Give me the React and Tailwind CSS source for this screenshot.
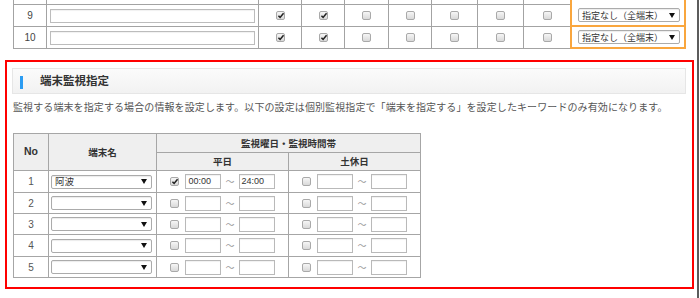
import React from 'react';

const FONT = "font-['Noto_Sans_CJK_JP',sans-serif]";
const NUM = "font-['Liberation_Sans',Arial,sans-serif]";

function Check({ checked }) {
  return (
    <span className="relative inline-flex w-[9px] h-[9px] shrink-0 rounded-[2px] border border-[#a9a9a9] bg-gradient-to-b from-[#f6f6f6] to-[#d9d9d9]">
      {checked && (
        <svg viewBox="0 0 10 10" className="absolute left-[0px] top-[-1px] w-[8px] h-[9px]">
          <path d="M1.8 5.2 L3.9 7.4 L8.2 2.2" fill="none" stroke="#222" strokeWidth="1.9" />
        </svg>
      )}
    </span>
  );
}

function Arrow() {
  return (
    <svg viewBox="0 0 6 5" className="w-[6px] h-[5px] shrink-0">
      <path d="M0 0 H6 L3 5 Z" fill="#111" />
    </svg>
  );
}

function Select({ label, width, textSize = 'text-[9.5px]' }) {
  return (
    <div
      className={`flex items-center justify-between h-[14px] ${width} rounded-[2px] border border-[#ababab] bg-white pl-[3px] pr-[4px] shadow-[inset_0_1px_1px_rgba(0,0,0,0.08)]`}
    >
      <span className={`${textSize} leading-none text-[#333]`}>{label}</span>
      <Arrow />
    </div>
  );
}

function TimeInput({ value }) {
  return (
    <div className={`flex items-center w-[36px] h-[15px] border border-[#b9b9b9] bg-white pl-[2px] ${NUM} text-[9px] text-[#333] leading-none shadow-[inset_0_1px_1px_rgba(0,0,0,0.06)]`}>
      {value}
    </div>
  );
}

function TimeRange({ checked, from, to }) {
  return (
    <div className="flex items-center justify-center h-full">
      <Check checked={checked} />
      <div className="ml-[6px]">
        <TimeInput value={from} />
      </div>
      <span className="mx-[4px] text-[9px] leading-none text-[#999]">～</span>
      <TimeInput value={to} />
    </div>
  );
}

const topCols = ['w-[33px]', 'w-[212px]', 'w-[43px]', 'w-[43px]', 'w-[44px]', 'w-[43px]', 'w-[46px]', 'w-[46px]', 'w-[46px]'];

function TopRow({ no, height, stub }) {
  const boxes = [true, true, false, false, false, false, false];
  return (
    <div className={`flex ${height}`}>
      <div className={`${topCols[0]} shrink-0 border-r border-b border-[#a3a3a3] flex items-center justify-center ${NUM} text-[10px] text-[#444]`}>
        {!stub && no}
      </div>
      <div className={`${topCols[1]} shrink-0 border-r border-b border-[#a3a3a3] flex items-center pl-[3px]`}>
        {!stub && <div className="w-[205px] h-[14px] border border-[#bcbcbc] bg-white shadow-[inset_0_1px_1px_rgba(0,0,0,0.06)]" />}
      </div>
      {boxes.map((c, i) => (
        <div
          key={i}
          className={`${topCols[i + 2]} shrink-0 ${i < 6 ? 'border-r' : ''} border-b border-[#a3a3a3] flex items-center justify-center`}
        >
          {!stub && <Check checked={c} />}
        </div>
      ))}
      <div className={`w-[116px] shrink-0 border-x-2 ${stub ? '' : 'border-b-2'} border-[#f9a63e] flex items-center pl-[6px]`}>
        {!stub && <Select label="指定なし（全端末）" width="w-[102px]" textSize="text-[9px]" />}
      </div>
    </div>
  );
}

const head = 'bg-[#efefef] border-r border-b border-[#a6a6a6] flex items-center justify-center text-[9.5px] font-bold text-[#333]';
const cell = 'border-r border-b border-[#a6a6a6] flex items-center';

const rows = [
  { no: 1, name: '阿波', wd: true, from: '00:00', to: '24:00' },
  { no: 2 },
  { no: 3 },
  { no: 4 },
  { no: 5 },
];

export default function App() {
  return (
    <div className={`flex w-[700px] h-[298px] overflow-hidden bg-white ${FONT}`}>
      <div className="w-[697px]">
        <div className="ml-[13px] w-[674px] border-l border-[#a3a3a3]">
          <TopRow stub height="h-[5px]" />
          <TopRow no={9} height="h-[22px]" />
          <TopRow no={10} height="h-[22px]" />
        </div>

        <div className="mt-[11px] ml-[5px] w-[689px] h-[229px] border-2 border-[#ff0000] pt-[6px] pl-[5px]">
          <div className="flex items-center w-[674px] h-[26px] border border-[#e6e6e6] bg-gradient-to-b from-[#fbfbfb] to-[#f2f2f2] pl-[7px]">
            <span className="w-[3px] h-[13px] mt-[2px] bg-[#2b9cf2]" />
            <span className="ml-[17px] text-[11.5px] font-bold text-[#333] leading-none">端末監視指定</span>
          </div>

          <p className="mt-[6px] ml-[1px] text-[10px] leading-[14px] tracking-[0.1px] text-[#555] whitespace-nowrap">
            監視する端末を指定する場合の情報を設定します。以下の設定は個別監視指定で「端末を指定する」を設定したキーワードのみ有効になります。
          </p>

          <div className="mt-[19px] ml-[1px] w-[408px] grid grid-cols-[35px_108px_132px_132px] grid-rows-[19px_18px_22px_21px_21px_22px_21px] border-l border-t border-[#a6a6a6]">
            <div className={`${head} row-span-2 ${NUM} text-[10.5px]`}>No</div>
            <div className={`${head} row-span-2`}>端末名</div>
            <div className={`${head} col-span-2`}>監視曜日・監視時間帯</div>
            <div className={head}>平日</div>
            <div className={head}>土休日</div>
            {rows.map((r) => (
              <React.Fragment key={r.no}>
                <div className={`${cell} justify-center ${NUM} text-[10px] text-[#555]`}>{r.no}</div>
                <div className={`${cell} pl-[2px]`}>
                  <Select label={r.name || ''} width="w-[101px]" />
                </div>
                <div className={cell + ' justify-center'}>
                  <TimeRange checked={!!r.wd} from={r.from || ''} to={r.to || ''} />
                </div>
                <div className={cell + ' justify-center'}>
                  <TimeRange checked={false} from="" to="" />
                </div>
              </React.Fragment>
            ))}
          </div>
        </div>
      </div>
      <div className="w-[2px] h-full bg-[#5c5c5c]" />
      <div className="w-[1px]" />
    </div>
  );
}
